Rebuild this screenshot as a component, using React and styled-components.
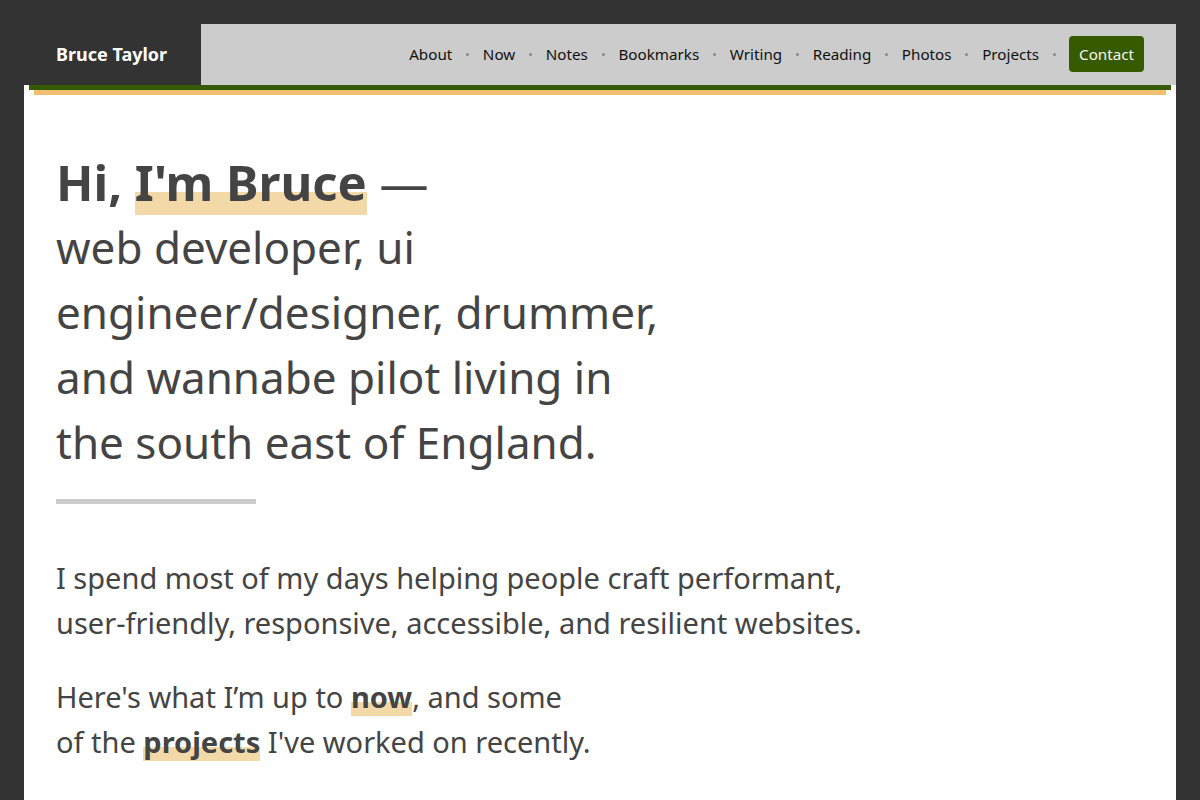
import React from "react";
import styled, { createGlobalStyle } from "styled-components";

const GlobalStyle = createGlobalStyle`
  html, body {
    margin: 0;
    padding: 0;
    background: #333;
  }
  body {
    font-family: "Noto Sans", "Open Sans", sans-serif;
    color: #444;
  }
  * { box-sizing: border-box; }
`;

const Page = styled.div`
  padding: 24px 24px 0;
  min-height: 100vh;
`;

const Header = styled.header`
  position: relative;
  z-index: 1;
  display: flex;
  height: 61px;
  box-shadow: 0 10px 0 -5px #365a00, 0 20px 0 -10px #f0c070;
`;

const Brand = styled.a`
  display: flex;
  align-items: center;
  width: 177px;
  padding-left: 32px;
  padding-bottom: 1px;
  background: #333;
  color: #fff;
  font-size: 18px;
  font-weight: 700;
  text-decoration: none;
`;

const Nav = styled.nav`
  flex: 1;
  display: flex;
  align-items: center;
  justify-content: flex-end;
  padding-right: 32px;
  padding-bottom: 1px;
  background: #ccc;
`;

const NavLink = styled.a`
  color: #111;
  font-size: 15.2px;
  line-height: 24px;
  text-decoration: none;
`;

const Sep = styled.span`
  display: flex;
  justify-content: center;
  align-items: center;
  width: ${(p) => p.$w || 30.6}px;
  &::before {
    content: "";
    width: 3px;
    height: 3px;
    border-radius: 50%;
    background: #888;
  }
`;

const ContactButton = styled.a`
  display: block;
  padding: 6px 10px;
  border-radius: 4px;
  background: #365a00;
  color: #f4f4ee;
  font-size: 15.2px;
  line-height: 24px;
  text-decoration: none;
`;

const Main = styled.main`
  background: #fff;
  padding: 65px 32px 60px;
  min-height: calc(100vh - 85px);
`;

const Title = styled.h1`
  margin: 0;
  max-width: 615px;
  font-size: 44px;
  font-weight: 400;
  line-height: 65px;
  color: #444;
`;

const Greeting = styled.span`
  display: block;
  font-size: 49px;
  font-weight: 700;
`;

const Dash = styled.span`
  font-weight: 400;
`;

const Mark = styled.span`
  background: linear-gradient(transparent 65%, #f3d8a8 65%);
  font-weight: 700;
`;

const Rule = styled.hr`
  width: 200px;
  height: 5px;
  margin: 24px 0 51px;
  border: 0;
  background: #ccc;
`;

const Lead = styled.p`
  margin: 0 0 29px;
  max-width: 820px;
  font-size: 29px;
  line-height: 45px;
  color: #444;
`;

const links = ["About", "Now", "Notes", "Bookmarks", "Writing", "Reading", "Photos", "Projects"];

export default function App() {
  return (
    <>
      <GlobalStyle />
      <Page>
        <Header>
          <Brand href="#">Bruce Taylor</Brand>
          <Nav>
            {links.map((l) => (
              <React.Fragment key={l}>
                <NavLink href="#">{l}</NavLink>
                <Sep $w={l === "Projects" ? 30 : undefined} />
              </React.Fragment>
            ))}
            <ContactButton href="#">Contact</ContactButton>
          </Nav>
        </Header>
        <Main>
          <Title>
            <Greeting>
              Hi, <Mark>I'm Bruce</Mark> <Dash>—</Dash>
            </Greeting>
            web developer, ui engineer/designer, drummer, and wannabe pilot living in the south east of England.
          </Title>
          <Rule />
          <Lead>
            I spend most of my days helping people craft performant, user-friendly, responsive, accessible, and resilient websites.
          </Lead>
          <Lead>
            Here's what I’m up to <Mark>now</Mark>, and some
            <br />
            of the <Mark>projects</Mark> I've worked on recently.
          </Lead>
        </Main>
      </Page>
    </>
  );
}
